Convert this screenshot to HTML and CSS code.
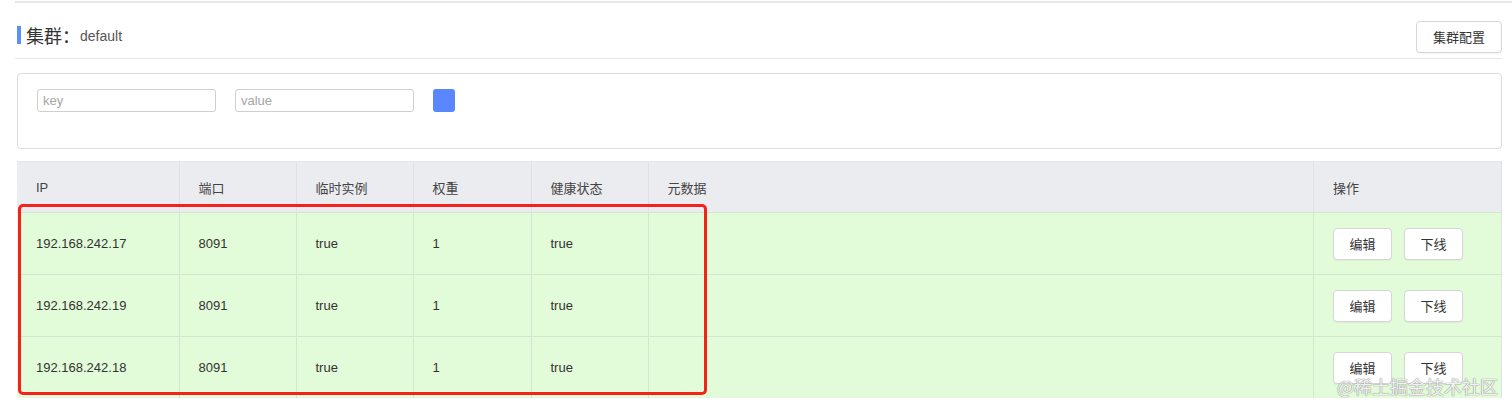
FILE: index.html
```html
<!DOCTYPE html>
<html lang="zh-CN">
<head>
    <meta charset="UTF-8">
    <title>集群</title>
    <link rel="stylesheet" href="styles.css">
</head>
<body>
    <div class="top-line"></div>
    <div class="page">
        <div class="cluster-head">
            <div class="cluster-title">
                <span class="title-mark"></span>
                <span class="title-label">集群：</span>
                <span class="title-name">default</span>
            </div>
            <button class="btn">集群配置</button>
        </div>

        <div class="filter-box">
            <input type="text" class="filter-input" placeholder="key">
            <input type="text" class="filter-input" placeholder="value">
            <button class="filter-btn"></button>
        </div>

        <div class="table-wrap">
            <table class="inst-table">
                <colgroup>
                    <col style="width:162px">
                    <col style="width:117px">
                    <col style="width:117px">
                    <col style="width:118px">
                    <col style="width:117px">
                    <col>
                    <col style="width:188px">
                </colgroup>
                <thead>
                    <tr>
                        <th>IP</th>
                        <th>端口</th>
                        <th>临时实例</th>
                        <th>权重</th>
                        <th>健康状态</th>
                        <th>元数据</th>
                        <th>操作</th>
                    </tr>
                </thead>
                <tbody>
                    <tr>
                        <td>192.168.242.17</td>
                        <td>8091</td>
                        <td>true</td>
                        <td>1</td>
                        <td>true</td>
                        <td></td>
                        <td><button class="btn btn-sm">编辑</button><button class="btn btn-sm">下线</button></td>
                    </tr>
                    <tr>
                        <td>192.168.242.19</td>
                        <td>8091</td>
                        <td>true</td>
                        <td>1</td>
                        <td>true</td>
                        <td></td>
                        <td><button class="btn btn-sm">编辑</button><button class="btn btn-sm">下线</button></td>
                    </tr>
                    <tr>
                        <td>192.168.242.18</td>
                        <td>8091</td>
                        <td>true</td>
                        <td>1</td>
                        <td>true</td>
                        <td></td>
                        <td><button class="btn btn-sm">编辑</button><button class="btn btn-sm">下线</button></td>
                    </tr>
                </tbody>
            </table>
            <div class="mark-box"></div>
            <div class="watermark">@稀土掘金技术社区</div>
        </div>
    </div>
</body>
</html>
```

FILE: styles.css
```css
body {
    margin: 0;
    padding: 0;
    background: #ffffff;
    color: #333333;
    font-family: "Liberation Sans", "Noto Sans CJK SC", sans-serif;
    font-size: 13px;
}
.top-line {
    height: 2px;
    margin: 1px 0 0 15px;
    background: #e4e6ea;
}
.page {
    padding: 0 10px 0 17px;
}
.cluster-head {
    box-sizing: border-box;
    display: flex;
    align-items: center;
    justify-content: space-between;
    height: 56px;
    padding: 12px 0 0 2px;
    margin-left: -2px;
    border-bottom: 1px solid #e6e6e6;
    margin-bottom: 14px;
}
.cluster-title {
    display: flex;
    align-items: center;
    margin-top: -3px;
}
.title-mark {
    display: inline-block;
    width: 4px;
    height: 18px;
    background: #5b8ff9;
    margin-right: 5px;
}
.title-label {
    font-size: 18px;
    color: #333;
}
.title-name {
    font-size: 14px;
    color: #555;
    margin-top: 2px;
}
.btn {
    font-family: "Liberation Sans", "Noto Sans CJK SC", sans-serif;
    font-size: 13px;
    color: #333;
    background: #ffffff;
    border: 1px solid #d6d6d6;
    border-radius: 4px;
    height: 32px;
    width: 86px;
    padding: 0;
    box-shadow: 0 1px 1px rgba(0, 0, 0, 0.05);
}
.filter-box {
    height: 59px;
    padding: 15px 19px 0;
    border: 1px solid #dcdcdc;
    border-radius: 4px;
    display: flex;
    align-items: flex-start;
    gap: 19px;
    margin-bottom: 12px;
}
.filter-input {
    box-sizing: border-box;
    width: 179px;
    height: 23px;
    border: 1px solid #cfcfcf;
    border-radius: 3px;
    padding: 0 5px;
    font-family: "Liberation Sans", sans-serif;
    font-size: 13px;
    color: #333;
    outline: none;
}
.filter-input::placeholder {
    color: #a5a5a5;
}
.filter-btn {
    width: 22px;
    height: 23px;
    border: none;
    border-radius: 3px;
    background: #5a87ff;
    padding: 0;
}
.table-wrap {
    position: relative;
}
.inst-table {
    width: 100%;
    border-collapse: collapse;
    table-layout: fixed;
}
.inst-table th {
    height: 50px;
    background: #ebecf0;
    font-weight: normal;
    text-align: left;
    color: #444;
    padding: 0 0 0 19px;
    border-left: 1px solid #dfe1e6;
    border-top: 1px solid #e4e6ea;
}
.inst-table td {
    height: 61px;
    background: #e2fbd8;
    padding: 0 0 0 19px;
    border-left: 1px solid #d4e6d0;
    border-top: 1px solid #d4e6d0;
}
.inst-table th:first-child,
.inst-table td:first-child {
    border-left: none;
}
.inst-table th:last-child,
.inst-table td:last-child {
    border-right: 1px solid #dfe1e6;
}
.btn-sm {
    width: 59px;
    height: 32px;
    margin-right: 12px;
}
.mark-box {
    position: absolute;
    left: 1px;
    top: 43px;
    width: 683px;
    height: 185px;
    border: 3px solid #f5221c;
    border-radius: 5px;
}
.watermark {
    position: absolute;
    right: 4px;
    bottom: -1px;
    font-size: 18px;
    color: rgba(255, 255, 255, 0.9);
    text-shadow: 0 0 1px #8a8a8a, 0 0 1px #8a8a8a;
    font-family: "Noto Sans CJK SC", sans-serif;
}
```
